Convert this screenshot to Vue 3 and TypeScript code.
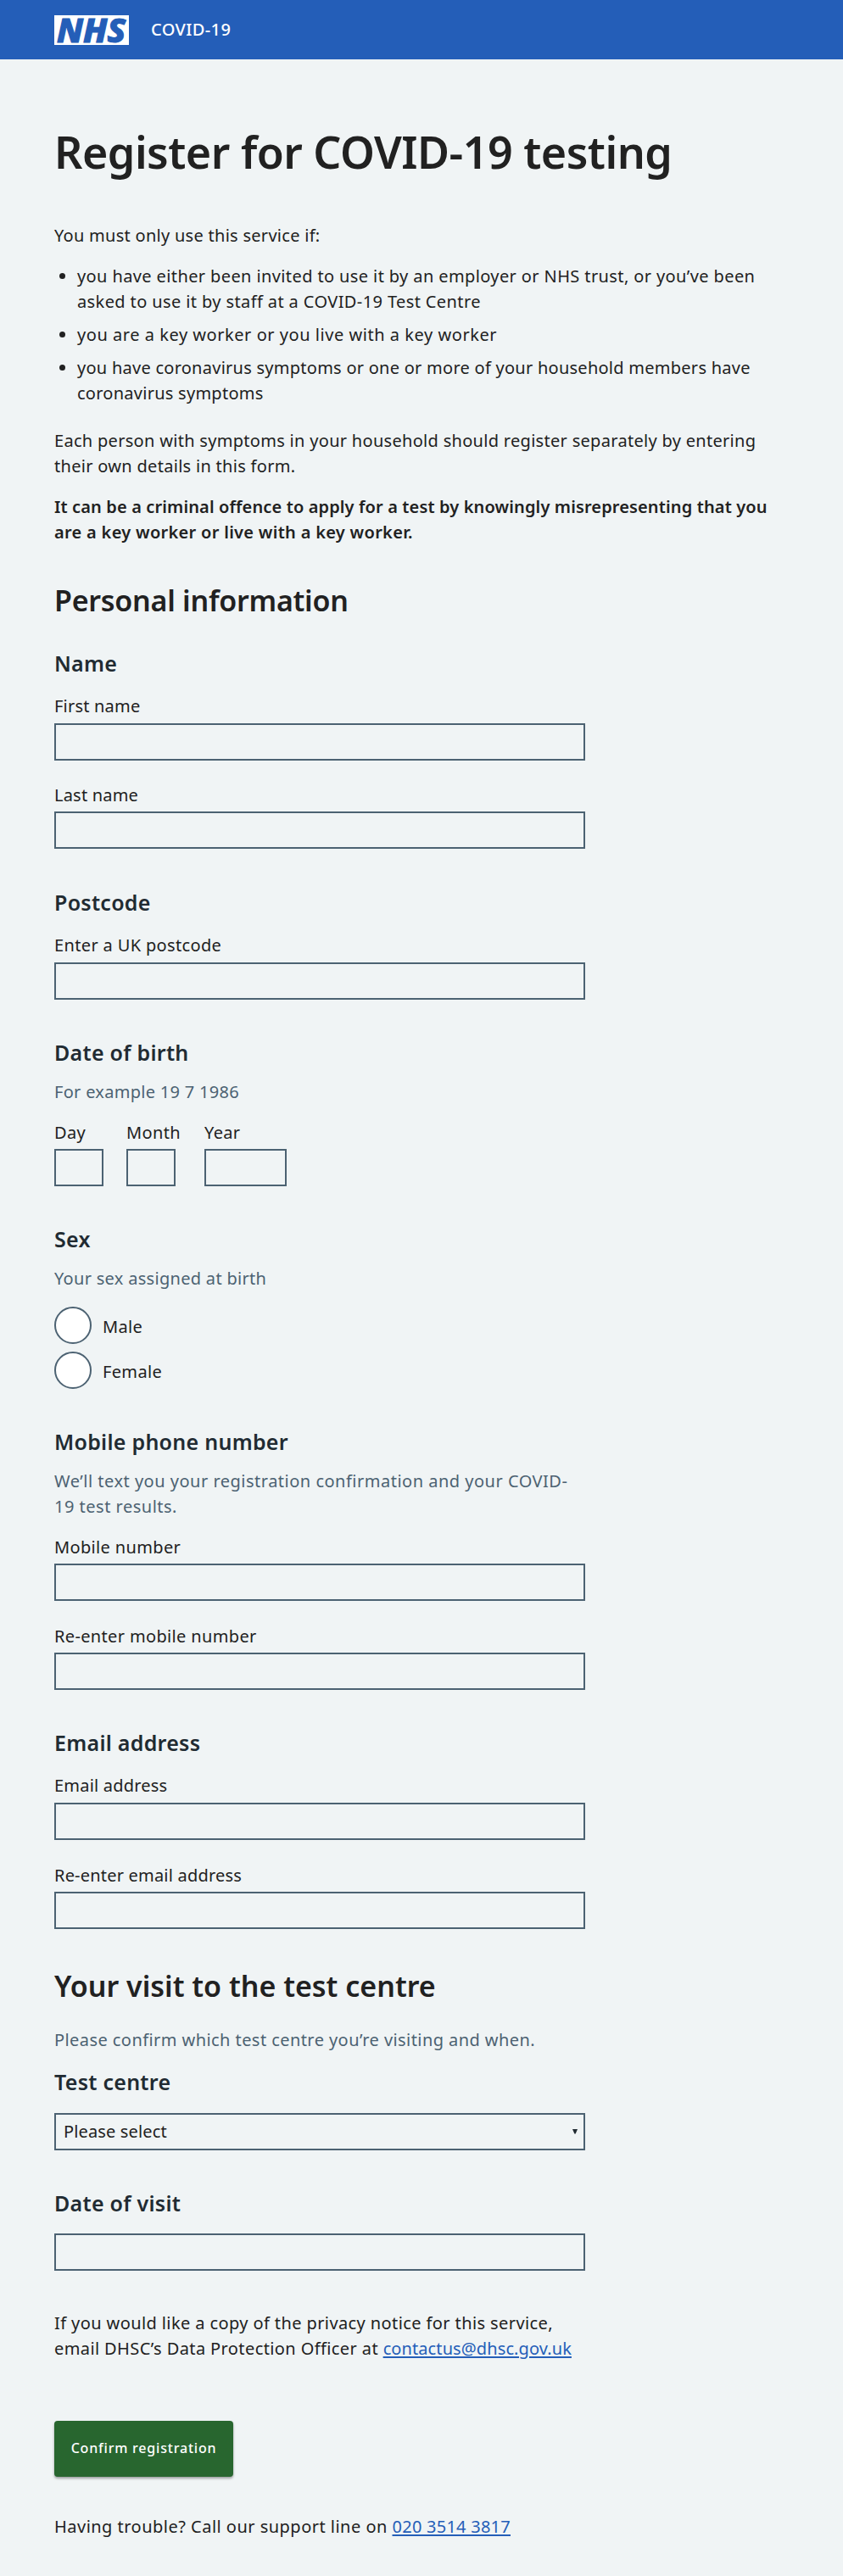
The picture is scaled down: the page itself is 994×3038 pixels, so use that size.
<script setup lang="ts">
import { ref } from 'vue'

interface Field {
  id: string
  label: string
  type: string
}

const nameFields: Field[] = [
  { id: 'first-name', label: 'First name', type: 'text' },
  { id: 'last-name', label: 'Last name', type: 'text' },
]
const mobileFields: Field[] = [
  { id: 'mobile', label: 'Mobile number', type: 'tel' },
  { id: 'mobile-repeat', label: 'Re-enter mobile number', type: 'tel' },
]
const emailFields: Field[] = [
  { id: 'email', label: 'Email address', type: 'email' },
  { id: 'email-repeat', label: 'Re-enter email address', type: 'email' },
]
const dateParts = [
  { id: 'day', label: 'Day' },
  { id: 'month', label: 'Month' },
  { id: 'year', label: 'Year' },
]
const sexes = ['Male', 'Female']

const values = ref<Record<string, string>>({})
const sex = ref('')
const centre = ref('')
</script>

<template>
  <div class="page">
    <header class="header">
      <svg class="logo" viewBox="0 0 88 35" role="img" aria-label="NHS">
        <rect width="88" height="35" fill="#fff" />
        <text class="logo-text" x="3" y="31.8" textLength="81" lengthAdjust="spacingAndGlyphs">NHS</text>
      </svg>
      <span class="service">COVID-19</span>
    </header>

    <main class="main">
      <h1>Register for COVID-19 testing</h1>

      <p class="intro">You must only use this service if:</p>
      <ul class="criteria">
        <li>you have either been invited to use it by an employer or NHS trust, or you’ve been<br />asked to use it by staff at a COVID-19 Test Centre</li>
        <li class="loose">you are a key worker or you live with a key worker</li>
        <li class="tight">you have coronavirus symptoms or one or more of your household members have<br />coronavirus symptoms</li>
      </ul>
      <p class="separate">Each person with symptoms in your household should register separately by entering<br />their own details in this form.</p>
      <p class="warning">It can be a criminal offence to apply for a test by knowingly misrepresenting that you<br /><span>are a key worker or live with a key worker.</span></p>

      <form class="form" @submit.prevent>
        <h2 class="personal">Personal information</h2>

        <section class="group name">
          <h3>Name</h3>
          <div v-for="f in nameFields" :key="f.id" class="field">
            <label :for="f.id">{{ f.label }}</label>
            <input :id="f.id" v-model="values[f.id]" :type="f.type" />
          </div>
        </section>

        <section class="group postcode">
          <h3>Postcode</h3>
          <div class="field">
            <label for="postcode">Enter a UK postcode</label>
            <input id="postcode" v-model="values.postcode" type="text" />
          </div>
        </section>

        <section class="group">
          <h3>Date of birth</h3>
          <p class="hint">For example 19 7 1986</p>
          <div class="date">
            <div v-for="d in dateParts" :key="d.id" :class="['part', d.id]">
              <label :for="d.id">{{ d.label }}</label>
              <input :id="d.id" v-model="values[d.id]" type="text" />
            </div>
          </div>
        </section>

        <section class="group">
          <h3>Sex</h3>
          <p class="hint">Your sex assigned at birth</p>
          <div class="radios">
            <label v-for="s in sexes" :key="s" class="radio">
              <input v-model="sex" type="radio" name="sex" :value="s" />
              <span>{{ s }}</span>
            </label>
          </div>
        </section>

        <section class="group">
          <h3>Mobile phone number</h3>
          <p class="hint long">We’ll text you your registration confirmation and your COVID-<br />19 test results.</p>
          <div v-for="f in mobileFields" :key="f.id" class="field">
            <label :for="f.id">{{ f.label }}</label>
            <input :id="f.id" v-model="values[f.id]" :type="f.type" />
          </div>
        </section>

        <section class="group">
          <h3>Email address</h3>
          <div v-for="f in emailFields" :key="f.id" class="field email">
            <label :for="f.id">{{ f.label }}</label>
            <input :id="f.id" v-model="values[f.id]" :type="f.type" />
          </div>
        </section>

        <h2 class="visit">Your visit to the test centre</h2>
        <p class="hint visit-hint">Please confirm which test centre you’re visiting and when.</p>

        <section class="group centre">
          <h3>Test centre</h3>
          <div class="select">
            <select v-model="centre" aria-label="Test centre">
              <option value="">Please select</option>
            </select>
            <svg class="arrow" viewBox="0 0 6 6"><path d="M0 0h6L3.6 5.6H2.4z" fill="#212b32" /></svg>
          </div>
        </section>

        <section class="group visit-date">
          <h3>Date of visit</h3>
          <input v-model="values.visit" type="text" aria-label="Date of visit" />
        </section>

        <p class="privacy">If you would like a copy of the privacy notice for this service,<br />email DHSC’s Data Protection Officer at <a href="#">contactus@dhsc.gov.uk</a></p>

        <button type="submit">Confirm registration</button>
      </form>

      <p class="support">Having trouble? Call our support line on <a class="phone" href="#">020 3514 3817</a></p>
    </main>
  </div>
</template>

<style>
body {
  margin: 0;
  background: #f0f4f5;
}
</style>

<style scoped>
* {
  box-sizing: border-box;
}
.page {
  min-height: 3038px;
  background: #f0f4f5;
  color: #212121;
  font: 400 20px/30px "Noto Sans", "Open Sans", sans-serif;
  letter-spacing: 0.35px;
}
.header {
  display: flex;
  align-items: flex-start;
  gap: 26px;
  height: 70px;
  padding: 18px 64px 0;
  background: #245eb8;
}
.logo {
  width: 88px;
  height: 35px;
  overflow: visible;
}
.logo-text {
  font: italic 800 40px "Noto Sans", sans-serif;
  letter-spacing: 0;
  fill: #245eb8;
  stroke: #245eb8;
  stroke-width: 1.2px;
}
.service {
  margin-top: 2px;
  color: #fff;
  font-weight: 500;
  letter-spacing: 0.4px;
}
.main {
  padding: 77px 64px 0;
}
h1,
h2,
h3,
p,
ul {
  margin: 0;
}
p,
li {
  white-space: nowrap;
}
h1 {
  font-size: 52px;
  line-height: 64px;
  font-weight: 600;
  letter-spacing: -0.5px;
}
h2 {
  font-size: 34px;
  line-height: 44px;
  font-weight: 600;
  letter-spacing: -0.25px;
}
h3 {
  color: #212b32;
  font-size: 25px;
  line-height: 32px;
  font-weight: 600;
  letter-spacing: 0.27px;
}
.intro {
  margin-top: 52px;
  letter-spacing: 0.28px;
}
.criteria {
  margin-top: 18px;
  padding-left: 27px;
  letter-spacing: 0.39px;
}
li + li {
  margin-top: 9px;
}
.loose {
  letter-spacing: 0.54px;
}
.tight {
  letter-spacing: 0.26px;
}
.separate {
  margin-top: 26px;
  letter-spacing: 0.3px;
}
.warning {
  margin-top: 18px;
  font-weight: 600;
  letter-spacing: 0.13px;
}
.warning span {
  letter-spacing: 0.3px;
}
.form {
  width: 626px;
}
.personal {
  margin: 43px 0 36px;
}
.group + .group {
  margin-top: 46px;
}
.group.name + .group {
  margin-top: 47px;
}
label {
  display: block;
}
input {
  display: block;
  width: 100%;
  height: 44px;
  margin: 0;
  padding: 0 8px;
  border: 2px solid #4c6272;
  border-radius: 0;
  background: transparent;
  color: inherit;
  font: inherit;
  appearance: none;
}
.field label {
  margin-bottom: 4px;
}
.name label {
  letter-spacing: 0.2px;
}
.field.email label {
  letter-spacing: 0.2px;
}
h3 + .field {
  margin-top: 20px;
}
h3 + .field label {
  margin-bottom: 5px;
}
.field + .field {
  margin-top: 27px;
}
.name .field + .field {
  margin-top: 26px;
}
.hint {
  color: #4c6272;
  margin: 16px 0 18px;
  letter-spacing: 0.3px;
}
.hint.long {
  letter-spacing: 0.5px;
}
.date {
  display: flex;
  gap: 27px;
}
.date label {
  margin-bottom: 4px;
}
.day {
  width: 58px;
}
.month {
  width: 65px;
}
.month input {
  width: 58px;
}
.year {
  width: 97px;
}
.radios {
  display: flex;
  flex-direction: column;
  gap: 9px;
}
.radio {
  display: flex;
  align-items: center;
  gap: 13px;
  height: 44px;
}
.radio input {
  width: 44px;
  padding: 0;
  border-radius: 50%;
  background: #fff;
}
.radio input:checked {
  box-shadow: inset 0 0 0 10px #fff;
  background: #212b32;
}
.radio span {
  padding-top: 4px;
}
.visit {
  margin-top: 45px;
  letter-spacing: 0;
}
.visit-hint {
  margin-top: 27px;
  letter-spacing: 0.43px;
}
.select {
  position: relative;
  margin-top: 21px;
}
select {
  display: block;
  width: 100%;
  height: 44px;
  margin: 0;
  padding: 0 9px;
  border: 2px solid #4c6272;
  border-radius: 0;
  background: transparent;
  color: inherit;
  font: inherit;
  letter-spacing: 0.15px;
  appearance: none;
}
.arrow {
  position: absolute;
  right: 9px;
  top: 19px;
  width: 6px;
  height: 6px;
  pointer-events: none;
}
.visit-date input {
  margin-top: 20px;
}
.privacy {
  margin-top: 47px;
  letter-spacing: 0.4px;
}
a {
  color: #245eb8;
  letter-spacing: 0.1px;
  text-decoration: underline;
  text-decoration-thickness: 2px;
  text-underline-offset: 2px;
}
.phone {
  letter-spacing: 0.25px;
}
button {
  display: block;
  width: 211px;
  height: 66px;
  margin-top: 70px;
  padding: 0 0 2px;
  border: 0;
  border-radius: 4px;
  background: #28662f;
  box-shadow: 0 2px 3px rgba(0, 0, 0, 0.35);
  color: #fff;
  font: 500 16px/22px "Noto Sans", sans-serif;
  letter-spacing: 0.8px;
}
.support {
  margin-top: 44px;
  letter-spacing: 0.48px;
}
</style>
